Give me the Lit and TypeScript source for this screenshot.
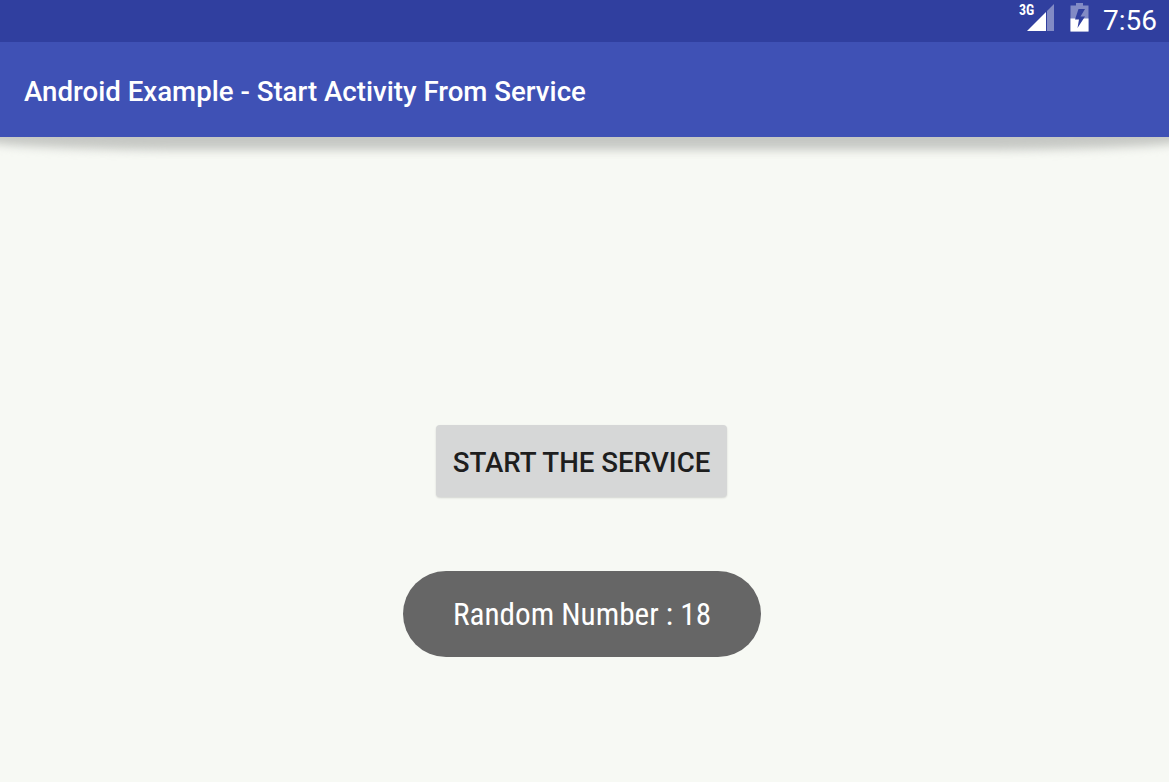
import { LitElement, html, css } from 'lit';
import { customElement } from 'lit/decorators.js';

@customElement('app-root')
export class AppRoot extends LitElement {
  static styles = css`
    :host {
      display: block;
      position: relative;
      height: 782px;
      background: #f7f9f4;
      font-family: Roboto, 'Liberation Sans', sans-serif;
      overflow: hidden;
    }

    .status {
      height: 42px;
      background: #303f9f;
      display: flex;
      justify-content: flex-end;
      align-items: center;
      color: #fff;
    }

    .status svg {
      display: block;
    }

    .signal {
      margin: 0 15px 10px 0;
    }

    .battery {
      margin: 0 14px 7px 0;
    }

    .clock {
      font-size: 28px;
      margin-right: 12px;
      line-height: 42px;
    }

    .bar {
      height: 95px;
      box-sizing: border-box;
      padding: 4px 0 0 24px;
      background: #3f51b5;
      display: flex;
      align-items: center;
      color: #fff;
      font-size: 27.65px;
      font-weight: 500;
      position: relative;
      z-index: 1;
    }

    /* shadow under the bar, narrows toward both ends */
    .shade {
      position: absolute;
      top: 125px;
      left: -30px;
      right: -30px;
      height: 25px;
      border-radius: 0 0 220px 220px / 0 0 12px 12px;
      background: #c6c8c4;
      filter: blur(5px);
    }

    .content {
      display: flex;
      flex-direction: column;
      align-items: center;
      padding-top: 288px;
      padding-right: 6px;
      position: relative;
    }

    .btn {
      width: 291px;
      height: 72px;
      box-sizing: border-box;
      border: 0;
      border-radius: 4px;
      background: #d6d7d7;
      box-shadow: 0 1px 2px rgba(0, 0, 0, 0.15);
      color: #1e1e1e;
      font: 500 27.7px Roboto, 'Liberation Sans', sans-serif;
      padding: 3px 0 0;
      white-space: nowrap;
    }

    .toast {
      margin-top: 74px;
      margin-left: 1px;
      width: 358px;
      height: 86px;
      box-sizing: border-box;
      padding-top: 1px;
      border-radius: 43px;
      background: #666666;
      color: #fff;
      display: flex;
      align-items: center;
      justify-content: center;
      font-size: 31.2px;
      font-stretch: 75%;
      white-space: nowrap;
    }
  `;

  render() {
    return html`
      <div class="status">
        <svg class="signal" width="36" height="32" viewBox="0 0 36 32">
          <polygon points="35,4 35,31 28,31 28,11" fill="#fff" fill-opacity="0.4"></polygon>
          <polygon points="27,12 27,31 8,31" fill="#fff"></polygon>
          <text x="0" y="15" font-size="14" font-weight="700" fill="#fff" font-stretch="75%" font-family="Roboto, sans-serif">3G</text>
        </svg>
        <svg class="battery" width="19" height="29" viewBox="0 0 19 29">
          <path d="M6 0h7v2.500h5.500V28.500H.5V2.500H6z" fill="#fff" fill-opacity="0.4"></path>
          <path d="M.5 15.500H18.500V28.500H.5z" fill="#fff"></path>
          <path d="M15 6H8.500L5 16.500h4L7.500 25l7.500-11.500h-4.500z" fill="#303f9f"></path>
        </svg>
        <span class="clock">7:56</span>
      </div>
      <div class="shade"></div>
      <div class="bar">Android Example - Start Activity From Service</div>
      <div class="content">
        <button class="btn">START THE SERVICE</button>
        <div class="toast">Random Number : 18</div>
      </div>
    `;
  }
}
